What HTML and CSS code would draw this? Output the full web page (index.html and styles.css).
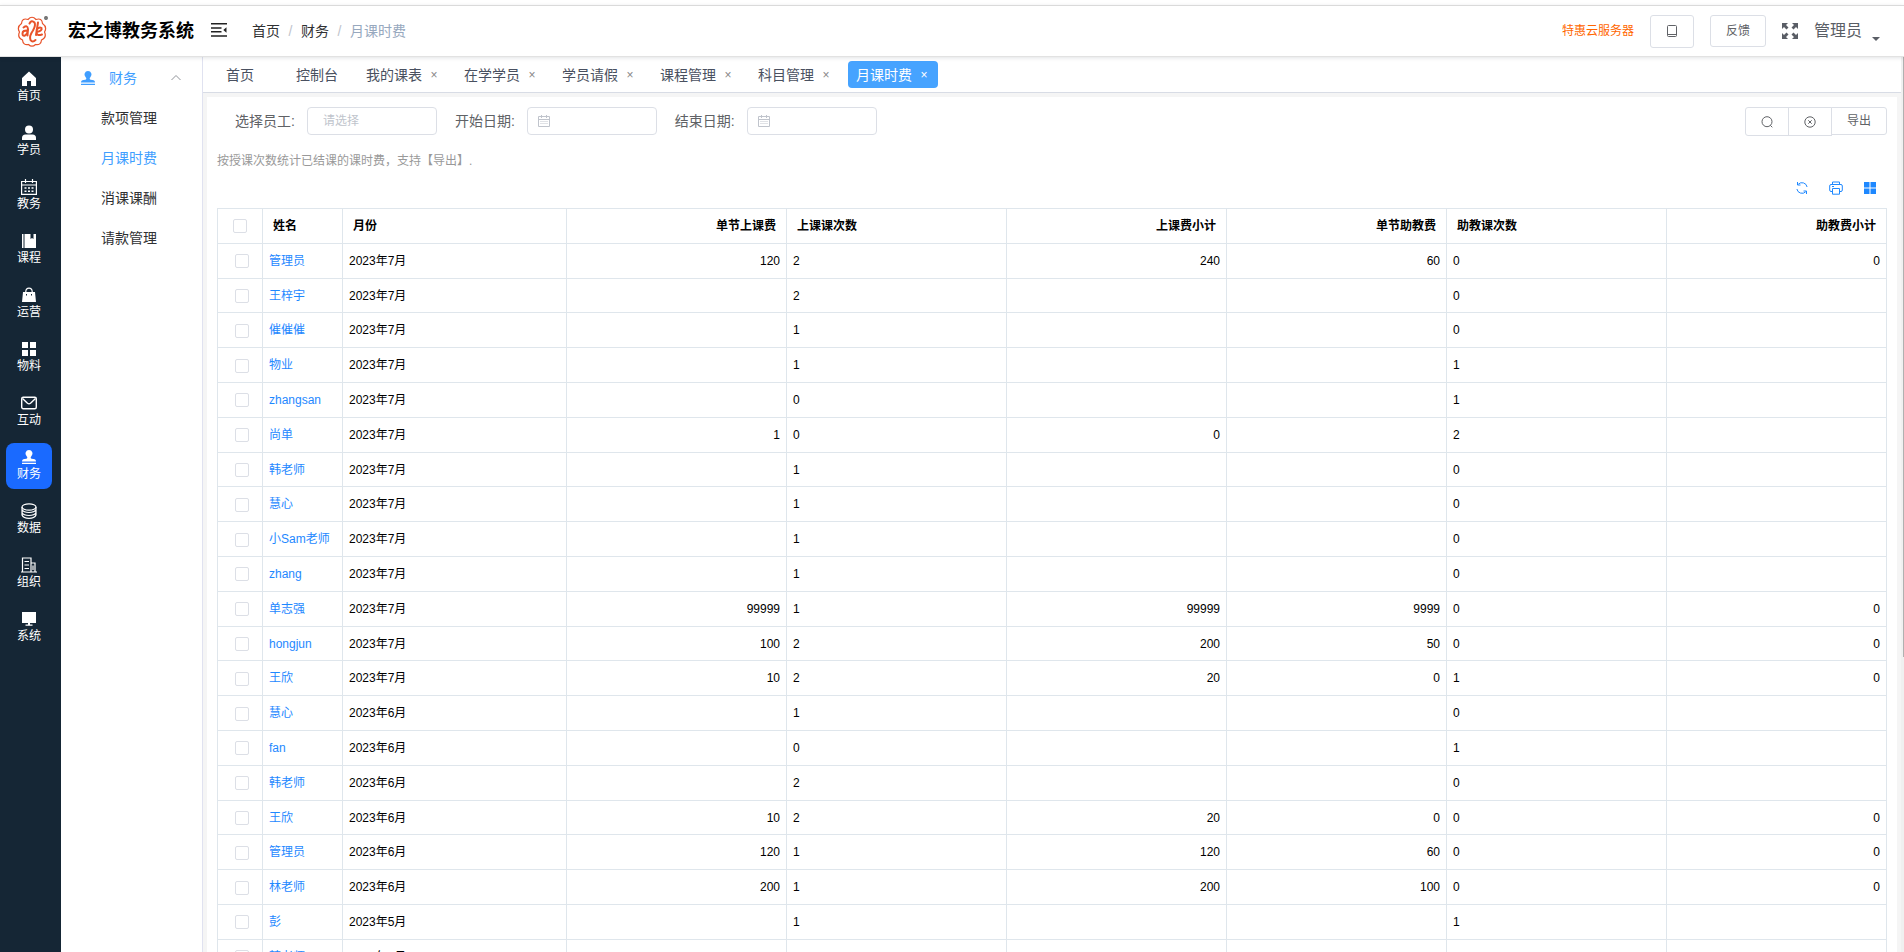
FILE: index.html
```html
<!DOCTYPE html>
<html lang="zh-CN">
<head>
<meta charset="utf-8">
<title>宏之博教务系统</title>
<link rel="stylesheet" href="styles.css">
</head>
<body>
<div class="app">
  <header class="header">
    <div class="brand">
      <svg class="brand-logo" viewBox="0 0 34 34" fill="none" stroke="#e8532a">
        <path stroke-width="1.2" d="M12 5.500Q16 1 20 5.500Q26 3.500 26.500 9.500Q31.500 13 28.500 18Q31 23.500 25.500 26Q25 31.500 19.500 30.500Q16 34 12.500 30.500Q7 31.500 6.500 26Q1 23.500 3.500 18Q.500 13 5.500 9.500Q6 3.500 12 5.500Z"/>
        <path stroke-width="2" stroke-linecap="round" d="M7.500 13.500Q11.500 10.500 12 15L11.500 21.500M12 16.500Q6.500 16 6.500 19.500Q6.500 22.500 9 21.500Q11.500 20 12 16.500M13.500 9.500Q15.500 5.500 18.500 8.500Q20 11 17 16.500Q13 22 14.500 26Q16.500 29 19.500 26M22 8.500L20 21M20.500 16Q23 12.500 25.500 14Q26.500 17 20.500 18Q20.500 22.500 26 20.500"/>
        <circle cx="30" cy="4" r="1.200" stroke="#666" stroke-width="1.500"/>
      </svg>
      <h1 class="brand-name">宏之博教务系统</h1>
    </div>
    <button class="icon-button fold" aria-label="收起菜单">
      <svg viewBox="0 0 16 16" fill="none" stroke="#222" stroke-width="1.500"><path d="M0 1.750H16M0 6H10.500M0 9.750H10.500M0 14H16"/><path d="M15.500 5.300V10.700L12.300 8Z" fill="#222" stroke="none"/></svg>
    </button>
    <nav class="breadcrumb" aria-label="当前位置">
      <a href="#">首页</a><span class="slash">/</span><a href="#">财务</a><span class="slash">/</span><span class="current">月课时费</span>
    </nav>
    <div class="header-tools">
      <a class="promo" href="#">特惠云服务器</a>
      <button class="button button-phone" aria-label="手机版">
        <svg viewBox="0 0 12 12" fill="none" stroke="#606266"><path d="M2.500.500H9.500Q10.500.500 10.500 1.500V10.500Q10.500 11.500 9.500 11.500H2.500Q1.500 11.500 1.500 10.500V1.500Q1.500.500 2.500.500ZM1.500 9.500H10.500"/></svg>
      </button>
      <button class="button button-feedback">反馈</button>
      <button class="icon-button" aria-label="全屏">
        <svg viewBox="0 0 16 16" fill="#5a5e66"><path d="M0 0H6L4 2L6.500 4.500L4.500 6.500L2 4L0 6ZM16 0V6L14 4L11.500 6.500L9.500 4.500L12 2L10 0ZM0 16V10L2 12L4.500 9.500L6.500 11.500L4 14L6 16ZM16 16H10L12 14L9.500 11.500L11.500 9.500L14 12L16 10Z"/></svg>
      </button>
      <button class="user">管理员<svg viewBox="0 0 8 4" fill="#5a5e66"><path d="M0 0H8L4 4Z"/></svg></button>
    </div>
  </header>

  <div class="body">
    <nav class="rail" aria-label="主菜单">
      <a href="#"><svg viewBox="0 0 16 16" fill="currentColor"><path d="M8 .500L1 7V15H6V10H10V15H15V7Z"/></svg>首页</a>
      <a href="#"><svg viewBox="0 0 16 16" fill="currentColor"><circle cx="8" cy="4.500" r="4"/><path d="M1 15V13Q1 9.500 4.500 9.500H11.500Q15 9.500 15 13V15Z"/></svg>学员</a>
      <a href="#"><svg viewBox="0 0 16 16" fill="none" stroke="currentColor"><path stroke-width="1.200" d="M.600 2.500H15.400V15.400H.600ZM.600 6H15.400M4.500 0V4M11.500 0V4"/><path stroke-width="1.400" stroke-dasharray="2 1.500" d="M3.500 9H12.500M3.500 12.300H12.500"/></svg>教务</a>
      <a href="#"><svg viewBox="0 0 16 16" fill="currentColor"><path d="M1 1H2.500V15H1ZM3.500 1H9.500V6L11 5L12.500 6V1H15V15H3.500Z"/></svg>课程</a>
      <a href="#"><svg viewBox="0 0 16 16" fill="currentColor"><path fill-rule="evenodd" d="M2 5H14L15 15H1ZM5 7V8.500H6V7ZM10 7V8.500H11V7Z"/><path d="M4.800 5.500V4.500Q5 1.200 8 1.200Q11 1.200 11.200 4.500V5.500" fill="none" stroke="currentColor" stroke-width="1.200"/></svg>运营</a>
      <a href="#"><svg viewBox="0 0 16 16" fill="currentColor"><path d="M1 1H7V7H1ZM9 1H15V7H9ZM1 9H7V15H1ZM9 9H15V15H9Z"/></svg>物料</a>
      <a href="#"><svg viewBox="0 0 16 16" fill="none" stroke="currentColor" stroke-width="1.400"><rect x=".700" y="2.200" width="14.600" height="11.600" rx="1.500"/><path d="M1.500 3.500L6.500 8.300Q8 9.500 9.500 8.300L14.500 3.500"/></svg>互动</a>
      <a href="#" class="active" aria-current="page"><svg viewBox="0 0 16 16" fill="currentColor"><path d="M8 1A3.500 3.500 0 0 0 5.500 7Q6.500 8 6.300 9Q6 10 3.500 10Q1 10 1 12.500H15Q15 10 12.500 10Q10 10 9.700 9Q9.500 8 10.500 7A3.500 3.500 0 0 0 8 1ZM1 13.700H15V15H1Z"/></svg>财务</a>
      <a href="#"><svg viewBox="0 0 16 16" fill="none" stroke="currentColor" stroke-width="1.200"><ellipse cx="8" cy="4" rx="7" ry="3.200"/><path d="M1 4V12Q2.500 15.400 8 15.400Q13.500 15.400 15 12V4M1 6.500Q2.500 9.500 8 9.500Q13.500 9.500 15 6.500M1 9.500Q2.500 12.500 8 12.500Q13.500 12.500 15 9.500"/></svg>数据</a>
      <a href="#"><svg viewBox="0 0 16 16" fill="none" stroke="currentColor" stroke-width="1.200"><path d="M0 15H16M1.500 15V1H10V15M10 6H14V15M3.500 4.500H8M3.500 8H8M3.500 11.500H8M12 8.500V13"/></svg>组织</a>
      <a href="#"><svg viewBox="0 0 16 16" fill="currentColor"><path d="M1 1H15V12H9V13.500H11.500V14.700H4.500V13.500H7V12H1Z"/></svg>系统</a>
    </nav>

    <nav class="submenu" aria-label="财务">
      <button class="submenu-title" aria-expanded="true">
        <svg class="stamp" viewBox="0 0 16 16" fill="currentColor"><path d="M8 1A3.500 3.500 0 0 0 5.500 7Q6.500 8 6.300 9Q6 10 3.500 10Q1 10 1 12.500H15Q15 10 12.500 10Q10 10 9.700 9Q9.500 8 10.500 7A3.500 3.500 0 0 0 8 1ZM1 13.700H15V15H1Z"/></svg>
        <span>财务</span>
        <svg class="chevron" viewBox="0 0 12 12" fill="none" stroke="#909399"><path d="M1.500 8L6 3.500L10.500 8"/></svg>
      </button>
      <a href="#">款项管理</a>
      <a href="#" class="active" aria-current="page">月课时费</a>
      <a href="#">消课课酬</a>
      <a href="#">请款管理</a>
    </nav>

    <main class="main">
      <div class="tabs">
        <div class="tab"><a href="#">首页</a></div>
        <div class="tab"><a href="#">控制台</a></div>
        <div class="tab"><a href="#">我的课表</a><button aria-label="关闭我的课表">×</button></div>
        <div class="tab"><a href="#">在学学员</a><button aria-label="关闭在学学员">×</button></div>
        <div class="tab"><a href="#">学员请假</a><button aria-label="关闭学员请假">×</button></div>
        <div class="tab"><a href="#">课程管理</a><button aria-label="关闭课程管理">×</button></div>
        <div class="tab"><a href="#">科目管理</a><button aria-label="关闭科目管理">×</button></div>
        <div class="tab active"><a href="#">月课时费</a><button aria-label="关闭月课时费">×</button></div>
      </div>

      <section class="panel">
        <form class="filters">
          <div class="field"><label for="staff">选择员工:</label><input id="staff" class="text-input" type="text" placeholder="请选择"></div>
          <div class="field"><label for="start">开始日期:</label>
            <span class="date-box"><svg viewBox="0 0 12 12" fill="none" stroke="#c0c4cc"><path d="M.500 1.500H11.500V11.500H.500ZM.500 4.500H11.500M3.500 0V3M8.500 0V3"/><path stroke-dasharray="1 1" d="M2.500 6.500H9.500M2.500 8.500H9.500"/></svg><input id="start" type="text"></span></div>
          <div class="field"><label for="end">结束日期:</label>
            <span class="date-box"><svg viewBox="0 0 12 12" fill="none" stroke="#c0c4cc"><path d="M.500 1.500H11.500V11.500H.500ZM.500 4.500H11.500M3.500 0V3M8.500 0V3"/><path stroke-dasharray="1 1" d="M2.500 6.500H9.500M2.500 8.500H9.500"/></svg><input id="end" type="text"></span></div>
          <div class="button-group">
            <button type="button" class="button" aria-label="查询"><svg viewBox="0 0 12 12" fill="none" stroke="#606266"><circle cx="6" cy="5.700" r="5"/><path d="M9.300 9.300L11.300 11.300"/></svg></button>
            <button type="button" class="button" aria-label="清空"><svg viewBox="0 0 12 12" fill="none" stroke="#606266"><circle cx="6" cy="6" r="5.200"/><path d="M4.300 4.300L7.700 7.700M7.700 4.300L4.300 7.700"/></svg></button>
            <button type="button" class="button">导出</button>
          </div>
        </form>

        <p class="hint">按授课次数统计已结课的课时费，支持【导出】.</p>

        <div class="table-tools">
          <button class="tool" aria-label="刷新"><svg viewBox="0 0 14 14" fill="none" stroke="currentColor"><path d="M3.300 3.200A5.200 5.200 0 0 1 12.100 6M1.900 8A5.200 5.200 0 0 0 10.700 10.800M2.500 1V4H5.500M11.500 13V10H8.500"/></svg></button>
          <button class="tool" aria-label="打印"><svg viewBox="0 0 14 14" fill="none" stroke="currentColor"><path d="M3.500 3.500V1H10.500V3.500M3.500 10.500H2Q.700 10.500.700 9V5Q.700 3.500 2 3.500H12Q13.300 3.500 13.300 5V9Q13.300 10.500 12 10.500H10.500M3.500 7.500H10.500V13.200H3.500ZM3 5.500H5"/></svg></button>
          <button class="tool" aria-label="列设置"><svg viewBox="0 0 14 14" fill="currentColor"><path d="M1 1H6.500V6.500H1ZM7.500 1H13V6.500H7.500ZM1 7.500H6.500V13H1ZM7.500 7.500H13V13H7.500Z"/></svg></button>
        </div>

        <table class="grid">
          <colgroup><col class="col-check"><col class="col-name"><col class="col-month"><col span="6"></colgroup>
          <thead>
            <tr><th><input type="checkbox" aria-label="全选"></th><th>姓名</th><th>月份</th><th class="num">单节上课费</th><th>上课课次数</th><th class="num">上课费小计</th><th class="num">单节助教费</th><th>助教课次数</th><th class="num">助教费小计</th></tr>
          </thead>
          <tbody>
            <tr><td><input type="checkbox" aria-label="选择"></td><td><a href="#">管理员</a></td><td>2023年7月</td><td class="num">120</td><td>2</td><td class="num">240</td><td class="num">60</td><td>0</td><td class="num">0</td></tr>
            <tr><td><input type="checkbox" aria-label="选择"></td><td><a href="#">王梓宇</a></td><td>2023年7月</td><td></td><td>2</td><td></td><td></td><td>0</td><td></td></tr>
            <tr><td><input type="checkbox" aria-label="选择"></td><td><a href="#">催催催</a></td><td>2023年7月</td><td></td><td>1</td><td></td><td></td><td>0</td><td></td></tr>
            <tr><td><input type="checkbox" aria-label="选择"></td><td><a href="#">物业</a></td><td>2023年7月</td><td></td><td>1</td><td></td><td></td><td>1</td><td></td></tr>
            <tr><td><input type="checkbox" aria-label="选择"></td><td><a href="#">zhangsan</a></td><td>2023年7月</td><td></td><td>0</td><td></td><td></td><td>1</td><td></td></tr>
            <tr><td><input type="checkbox" aria-label="选择"></td><td><a href="#">尚单</a></td><td>2023年7月</td><td class="num">1</td><td>0</td><td class="num">0</td><td></td><td>2</td><td></td></tr>
            <tr><td><input type="checkbox" aria-label="选择"></td><td><a href="#">韩老师</a></td><td>2023年7月</td><td></td><td>1</td><td></td><td></td><td>0</td><td></td></tr>
            <tr><td><input type="checkbox" aria-label="选择"></td><td><a href="#">慧心</a></td><td>2023年7月</td><td></td><td>1</td><td></td><td></td><td>0</td><td></td></tr>
            <tr><td><input type="checkbox" aria-label="选择"></td><td><a href="#">小Sam老师</a></td><td>2023年7月</td><td></td><td>1</td><td></td><td></td><td>0</td><td></td></tr>
            <tr><td><input type="checkbox" aria-label="选择"></td><td><a href="#">zhang</a></td><td>2023年7月</td><td></td><td>1</td><td></td><td></td><td>0</td><td></td></tr>
            <tr><td><input type="checkbox" aria-label="选择"></td><td><a href="#">单志强</a></td><td>2023年7月</td><td class="num">99999</td><td>1</td><td class="num">99999</td><td class="num">9999</td><td>0</td><td class="num">0</td></tr>
            <tr><td><input type="checkbox" aria-label="选择"></td><td><a href="#">hongjun</a></td><td>2023年7月</td><td class="num">100</td><td>2</td><td class="num">200</td><td class="num">50</td><td>0</td><td class="num">0</td></tr>
            <tr><td><input type="checkbox" aria-label="选择"></td><td><a href="#">王欣</a></td><td>2023年7月</td><td class="num">10</td><td>2</td><td class="num">20</td><td class="num">0</td><td>1</td><td class="num">0</td></tr>
            <tr><td><input type="checkbox" aria-label="选择"></td><td><a href="#">慧心</a></td><td>2023年6月</td><td></td><td>1</td><td></td><td></td><td>0</td><td></td></tr>
            <tr><td><input type="checkbox" aria-label="选择"></td><td><a href="#">fan</a></td><td>2023年6月</td><td></td><td>0</td><td></td><td></td><td>1</td><td></td></tr>
            <tr><td><input type="checkbox" aria-label="选择"></td><td><a href="#">韩老师</a></td><td>2023年6月</td><td></td><td>2</td><td></td><td></td><td>0</td><td></td></tr>
            <tr><td><input type="checkbox" aria-label="选择"></td><td><a href="#">王欣</a></td><td>2023年6月</td><td class="num">10</td><td>2</td><td class="num">20</td><td class="num">0</td><td>0</td><td class="num">0</td></tr>
            <tr><td><input type="checkbox" aria-label="选择"></td><td><a href="#">管理员</a></td><td>2023年6月</td><td class="num">120</td><td>1</td><td class="num">120</td><td class="num">60</td><td>0</td><td class="num">0</td></tr>
            <tr><td><input type="checkbox" aria-label="选择"></td><td><a href="#">林老师</a></td><td>2023年6月</td><td class="num">200</td><td>1</td><td class="num">200</td><td class="num">100</td><td>0</td><td class="num">0</td></tr>
            <tr><td><input type="checkbox" aria-label="选择"></td><td><a href="#">彭</a></td><td>2023年5月</td><td></td><td>1</td><td></td><td></td><td>1</td><td></td></tr>
            <tr><td><input type="checkbox" aria-label="选择"></td><td><a href="#">韩老师</a></td><td>2023年5月</td><td></td><td>1</td><td></td><td></td><td>0</td><td></td></tr>
          </tbody>
        </table>
      </section>
    </main>
    <div class="scroll-track"><div class="scroll-thumb"></div></div>
  </div>
</div>
</body>
</html>
```

FILE: styles.css
```css
* {
  box-sizing: border-box;
}

body {
  margin: 0;
  color: #000;
  background: #fff;
  font: 12px/20px "Liberation Sans", "Noto Sans CJK SC", sans-serif;
}

a {
  color: inherit;
  text-decoration: none;
}

button,
input {
  margin: 0;
  padding: 0;
  border: 0;
  background: none;
  color: inherit;
  font: inherit;
}

svg {
  display: block;
  flex: none;
}

.app {
  display: flex;
  flex-direction: column;
  height: 100vh;
  padding-top: 5px;
  overflow: hidden;
}

/* Header */
.header {
  display: flex;
  align-items: center;
  flex: none;
  height: 52px;
  padding-right: 24px;
  border-top: 1px solid #dadada;
  border-bottom: 1px solid #e2e2e2;
  background: #fff;
  box-shadow: 0 1px 4px rgba(0, 21, 41, 0.12);
  z-index: 1;
}

.brand {
  display: flex;
  align-items: center;
  gap: 18px;
  padding-left: 16px;
}

.brand-logo {
  width: 34px;
  height: 34px;
}

.brand-name {
  margin: 0;
  font-size: 18px;
  line-height: 24px;
}

.icon-button svg {
  width: 16px;
  height: 16px;
}

.fold {
  margin: 0 25px 2px 17px;
}

.breadcrumb {
  display: flex;
  color: #303133;
  font-size: 14px;
}

.breadcrumb .slash {
  width: 21px;
  color: #c0c4cc;
  text-align: center;
}

.breadcrumb .current {
  color: #97a8be;
}

.header-tools {
  display: flex;
  align-items: center;
  gap: 16px;
  margin-left: auto;
  color: #5a5e66;
}

.promo {
  color: #ff6600;
}

.button {
  display: flex;
  align-items: center;
  justify-content: center;
  border: 1px solid #dcdfe6;
  border-radius: 3px;
  background: #fff;
  color: #606266;
}

.button svg {
  width: 12px;
  height: 12px;
}

.button-phone {
  width: 44px;
  height: 33px;
}

.button-feedback {
  width: 56px;
  height: 32px;
}

.user {
  display: flex;
  align-items: flex-end;
  gap: 10px;
  font-size: 16px;
}

.user svg {
  width: 8px;
  height: 4px;
}

/* Body columns */
.body {
  display: flex;
  flex: 1;
  min-height: 0;
}

.rail {
  display: flex;
  flex-direction: column;
  gap: 8px;
  flex: none;
  width: 61px;
  padding: 8px 9px 8px 6px;
  background: #152635;
}

.rail a {
  display: flex;
  flex-direction: column;
  align-items: center;
  height: 46px;
  padding-top: 6px;
  border-radius: 8px;
  color: #fff;
  line-height: 18px;
}

.rail svg {
  width: 16px;
  height: 16px;
}

.rail .active {
  background: #1a6aff;
}

.submenu {
  flex: none;
  width: 142px;
  padding-top: 1px;
  border-right: 1px solid #e0e2f0;
  color: #303133;
  font-size: 14px;
  line-height: 40px;
}

.submenu-title {
  display: flex;
  align-items: center;
  width: 100%;
  height: 40px;
  padding: 0 20px 0 19px;
  color: #409eff;
}

.submenu-title .stamp {
  width: 16px;
  height: 16px;
  margin-right: 13px;
}

.submenu-title .chevron {
  width: 12px;
  height: 12px;
  margin-left: auto;
}

.submenu a {
  display: block;
  padding-left: 40px;
}

.submenu .active {
  color: #409eff;
}

.main {
  display: flex;
  flex-direction: column;
  flex: 1;
  min-width: 0;
  background: #f5f5f5;
}

/* Tabs */
.tabs {
  display: flex;
  align-items: flex-start;
  gap: 8px;
  flex: none;
  height: 36px;
  padding: 4px 15px;
  border-bottom: 1px solid #d8dce5;
  background: #fff;
}

.tab {
  display: flex;
  align-items: center;
  gap: 6px;
  min-width: 62px;
  height: 27px;
  padding: 0 8px;
  border-radius: 4px;
  color: #495060;
  font-size: 14px;
}

.tab button {
  width: 12px;
  color: #888;
  font-size: 12px;
}

.tab.active,
.tab.active button {
  background: #46a3ff;
  color: #fff;
}

/* Panel */
.panel {
  flex: 1;
  min-height: 0;
  margin: 4px 4px 0;
  padding: 10px;
  background: #fff;
  overflow: hidden;
}

.filters {
  display: flex;
  align-items: flex-start;
  gap: 18px;
  padding-left: 18px;
}

.field {
  display: flex;
  align-items: center;
  gap: 12px;
  color: #606266;
  font-size: 14px;
}

.text-input,
.date-box {
  width: 130px;
  height: 28px;
  border: 1px solid #dcdfe6;
  border-radius: 4px;
  font-size: 12px;
}

.text-input {
  padding: 0 15px;
}

.text-input::placeholder {
  color: #c0c4cc;
}

.date-box {
  display: flex;
  align-items: center;
  gap: 6px;
  padding: 0 10px;
}

.date-box svg {
  width: 12px;
  height: 12px;
}

.date-box input {
  width: 100%;
  min-width: 0;
}

.button-group {
  display: flex;
  align-items: flex-start;
  margin-left: auto;
}

.button-group .button {
  width: 44px;
  height: 29px;
  margin-right: -1px;
  border-radius: 0;
}

.button-group .button:first-child {
  border-radius: 3px 0 0 3px;
}

.button-group .button:last-child {
  width: 56px;
  height: 28px;
  margin-right: 0;
  border-radius: 0 3px 3px 0;
}

.hint {
  margin: 15px 0 9px;
  color: #999;
}

.table-tools {
  display: flex;
  justify-content: flex-end;
  gap: 20px;
  padding: 1px 10px 13px 0;
}

.tool {
  color: #1e88ff;
}

.tool svg {
  width: 14px;
  height: 14px;
}

/* Table */
.grid {
  width: 100%;
  border: 1px solid #d6d9dc;
  border-collapse: collapse;
  table-layout: fixed;
  line-height: 1.9;
}

.grid th,
.grid td {
  padding: 6px 6px 5px;
  border: 1px solid #dfe6ec;
  text-align: left;
  white-space: nowrap;
}

.grid th {
  padding-right: 10px;
  padding-left: 10px;
}

.grid .num {
  text-align: right;
}

.grid a {
  color: #1e88ff;
}

.grid th:first-child,
.grid td:first-child {
  padding-right: 0;
  padding-left: 17px;
}

.grid th:first-child {
  padding-left: 15px;
}

.col-check {
  width: 45px;
}

.col-name {
  width: 80px;
}

.col-month {
  width: 224px;
}

.grid input {
  display: block;
  appearance: none;
  width: 14px;
  height: 14px;
  border: 1px solid #dcdfe6;
  border-radius: 2px;
  background: #fff;
}

/* Page scrollbar */
.scroll-track {
  flex: none;
  width: 3px;
  background: #f0f0f0;
}

.scroll-thumb {
  width: 1px;
  height: 67%;
  margin-left: auto;
  background: #b0b0b0;
}
```
